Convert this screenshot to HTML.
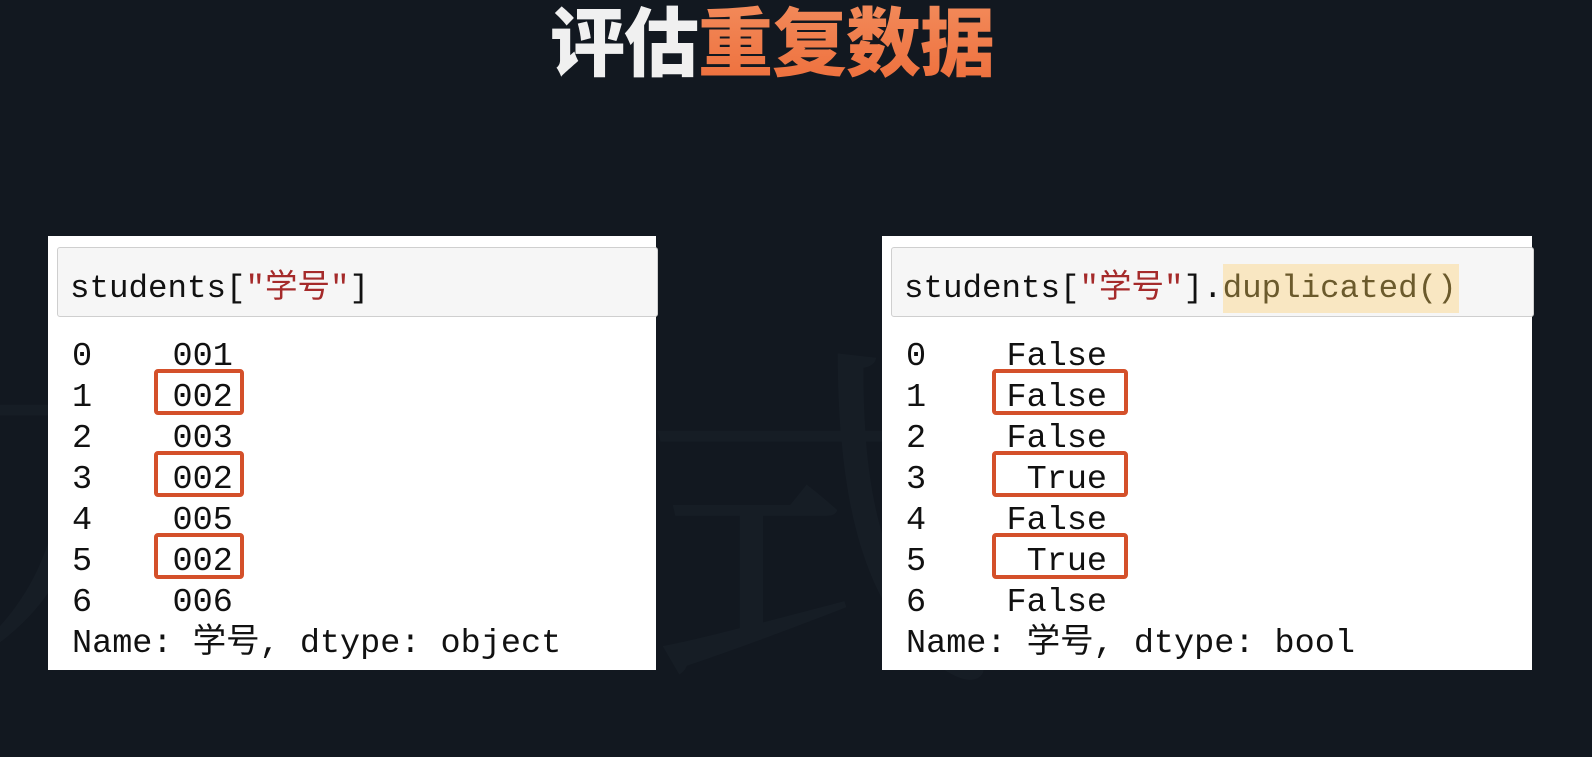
<!DOCTYPE html>
<html><head><meta charset="utf-8"><style>
html,body{margin:0;padding:0;}
body{width:1592px;height:704px;background:#121820;position:relative;overflow:hidden;font-family:"Liberation Mono","Noto Sans CJK SC",monospace;}
.title{position:absolute;left:550px;top:-17px;font-family:"Liberation Sans","Noto Sans CJK SC",sans-serif;font-weight:900;font-size:75px;letter-spacing:-1px;white-space:nowrap;}
.w{color:#f0f0f0;}
.o{background:linear-gradient(#f28a5a,#ee6f3c);-webkit-background-clip:text;background-clip:text;color:transparent;}
.wm{position:absolute;color:#161d25;font-family:"Noto Serif CJK SC",serif;font-size:360px;top:220px;}
.panel{position:absolute;top:236px;height:434px;background:#fff;}
.code{position:absolute;left:9px;top:11px;right:-2px;height:70px;background:#f6f6f6;border:1px solid #cfcfcf;border-radius:3px;box-sizing:border-box;}
.code span.t{position:absolute;left:12px;top:12px;font-size:32.5px;color:#111;white-space:pre;}
.s{color:#a52a2a;}
.hl{background:#f9e7c2;color:#6b5a2c;padding:6px 2px 6px 0;}
.out{position:absolute;left:24px;top:101px;font-size:33.5px;line-height:41px;color:#111;white-space:pre;}
.box{position:absolute;border:4px solid #d4502a;border-radius:4px;box-sizing:border-box;}
</style></head><body>
<div class="wm" style="left:-60px">方</div>
<div class="wm" style="left:640px;top:240px">式</div>
<div class="title"><span class="w">评估</span><span class="o">重复数据</span></div>

<div class="panel" style="left:48px;width:608px;">
  <div class="code"><span class="t">students[<span class="s">"学号"</span>]</span></div>
  <div class="out">0    001
1    002
2    003
3    002
4    005
5    002
6    006
Name: 学号, dtype: object</div>
  <div class="box" style="left:106px;top:133px;width:90px;height:46px"></div>
  <div class="box" style="left:106px;top:215px;width:90px;height:46px"></div>
  <div class="box" style="left:106px;top:297px;width:90px;height:46px"></div>
</div>

<div class="panel" style="left:882px;width:650px;">
  <div class="code"><span class="t">students[<span class="s">"学号"</span>].<span class="hl">duplicated()</span></span></div>
  <div class="out">0    False
1    False
2    False
3     True
4    False
5     True
6    False
Name: 学号, dtype: bool</div>
  <div class="box" style="left:110px;top:133px;width:136px;height:46px"></div>
  <div class="box" style="left:110px;top:215px;width:136px;height:46px"></div>
  <div class="box" style="left:110px;top:297px;width:136px;height:46px"></div>
</div>
</body></html>
